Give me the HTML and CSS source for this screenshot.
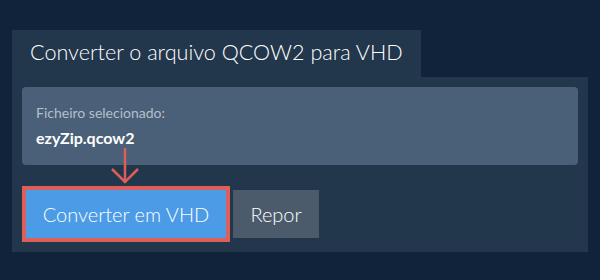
FILE: index.html
```html
<!DOCTYPE html>
<html lang="pt">
<head>
    <meta charset="UTF-8">
    <meta name="viewport" content="width=device-width, initial-scale=1.0">
    <title>Converter QCOW2 para VHD</title>
    <link rel="stylesheet" href="styles.css">
</head>
<body>
    <div class="converter">
        <div class="tab-title">Converter o arquivo QCOW2 para VHD</div>

        <div class="panel">
            <div class="file-box">
                <div class="file-label">Ficheiro selecionado:</div>
                <div class="file-name">ezyZip.qcow2</div>
            </div>

            <div class="actions">
                <svg class="hint-arrow" width="30" height="38" viewBox="0 0 30 38">
                    <path d="M15 0 V35" stroke="#de5f57" stroke-width="2.5" fill="none"/>
                    <path d="M2 21 L15 34 L28 21" stroke="#de5f57" stroke-width="2.5" fill="none"/>
                </svg>
                <button class="btn btn-convert">Converter em VHD</button>
                <button class="btn btn-reset">Repor</button>
            </div>
        </div>
    </div>
</body>
</html>
```

FILE: styles.css
```css
body {
    margin: 0;
    padding: 30px 12px;
    background-color: #10233a;
    font-family: Lato, "Open Sans", sans-serif;
    color: #fff;
}
.converter {
    width: 576px;
}
.tab-title {
    width: 391px;
    height: 47px;
    padding-left: 18px;
    background-color: #22364c;
    font-size: 21.6px;
    font-weight: 300;
    line-height: 45px;
}
.panel {
    background-color: #22364c;
    padding: 10px 10px 14px;
}
.file-box {
    background-color: #4a6078;
    border-radius: 4px;
    height: 78px;
    padding: 16px 14px 0;
    box-sizing: border-box;
}
.file-label {
    font-size: 14px;
    line-height: 19px;
    color: #b3bfcb;
}
.file-name {
    margin-top: 5px;
    font-size: 16px;
    font-weight: bold;
    line-height: 21px;
}
.actions {
    position: relative;
    display: flex;
    gap: 7px;
    margin-top: 25px;
}
.hint-arrow {
    position: absolute;
    left: 88px;
    top: -42px;
}
.btn {
    height: 48px;
    border: none;
    color: #fff;
    font-family: Lato, "Open Sans", sans-serif;
    font-size: 20px;
    font-weight: 300;
    cursor: pointer;
}
.btn-convert {
    width: 200px;
    margin-left: 4px;
    background-color: #4b9be6;
    outline: 4px solid #de5f5a;
}
.btn-reset {
    width: 86px;
    background-color: #4b5b6c;
}
```
